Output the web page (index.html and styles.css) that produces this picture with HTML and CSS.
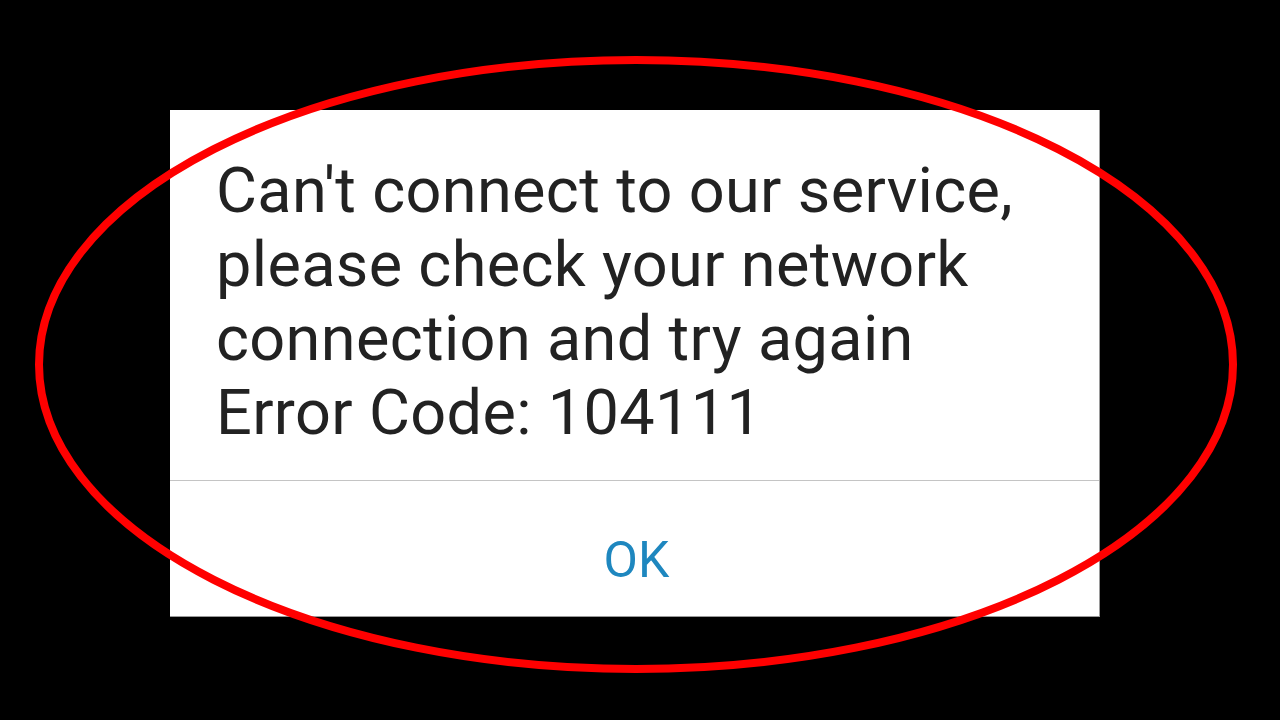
FILE: index.html
```html
<!DOCTYPE html>
<html lang="en">
<head>
<meta charset="utf-8">
<title>Error</title>
<link rel="stylesheet" href="styles.css">
</head>
<body>
<div class="stage">
  <div class="dialog">
    <div class="message">
      <p class="line">Can't connect to our service,</p>
      <p class="line">please check your network</p>
      <p class="line">connection and try again</p>
      <p class="line">Error Code: 104111</p>
    </div>
    <div class="actions">
      <span class="ok">OK</span>
    </div>
  </div>
  <svg class="ring" width="1280" height="720" viewBox="0 0 1280 720">
    <ellipse cx="636" cy="364.5" rx="597" ry="304.5" fill="none" stroke="#ff0000" stroke-width="8"/>
  </svg>
</div>
</body>
</html>
```

FILE: styles.css
```css
html, body {
  margin: 0;
  padding: 0;
  background: #000;
}
.stage {
  position: relative;
  width: 1280px;
  height: 720px;
  overflow: hidden;
  background: #000;
  padding-top: 110px;
  box-sizing: border-box;
}
.dialog {
  margin-left: 170px;
  width: 930px;
  height: 507px;
  background: #fff;
  box-sizing: border-box;
  border-right: 1px solid #9a9a9a;
  border-bottom: 1px solid #9a9a9a;
  display: flex;
  flex-direction: column;
  font-family: Roboto, "Noto Sans", sans-serif;
}
.message {
  padding: 44px 0 30px 46px;
  border-bottom: 1px solid #c4c4c4;
}
.line {
  margin: 0;
  font-size: 63px;
  line-height: 74px;
  letter-spacing: 0.35px;
  color: #222;
  white-space: nowrap;
}
.actions {
  flex: 1;
  display: flex;
  justify-content: center;
  padding-top: 49px;
  padding-left: 4px;
}
.ok {
  font-size: 50px;
  line-height: 60px;
  color: #1e87bf;
}
.ring {
  position: absolute;
  left: 0;
  top: 0;
}
```
